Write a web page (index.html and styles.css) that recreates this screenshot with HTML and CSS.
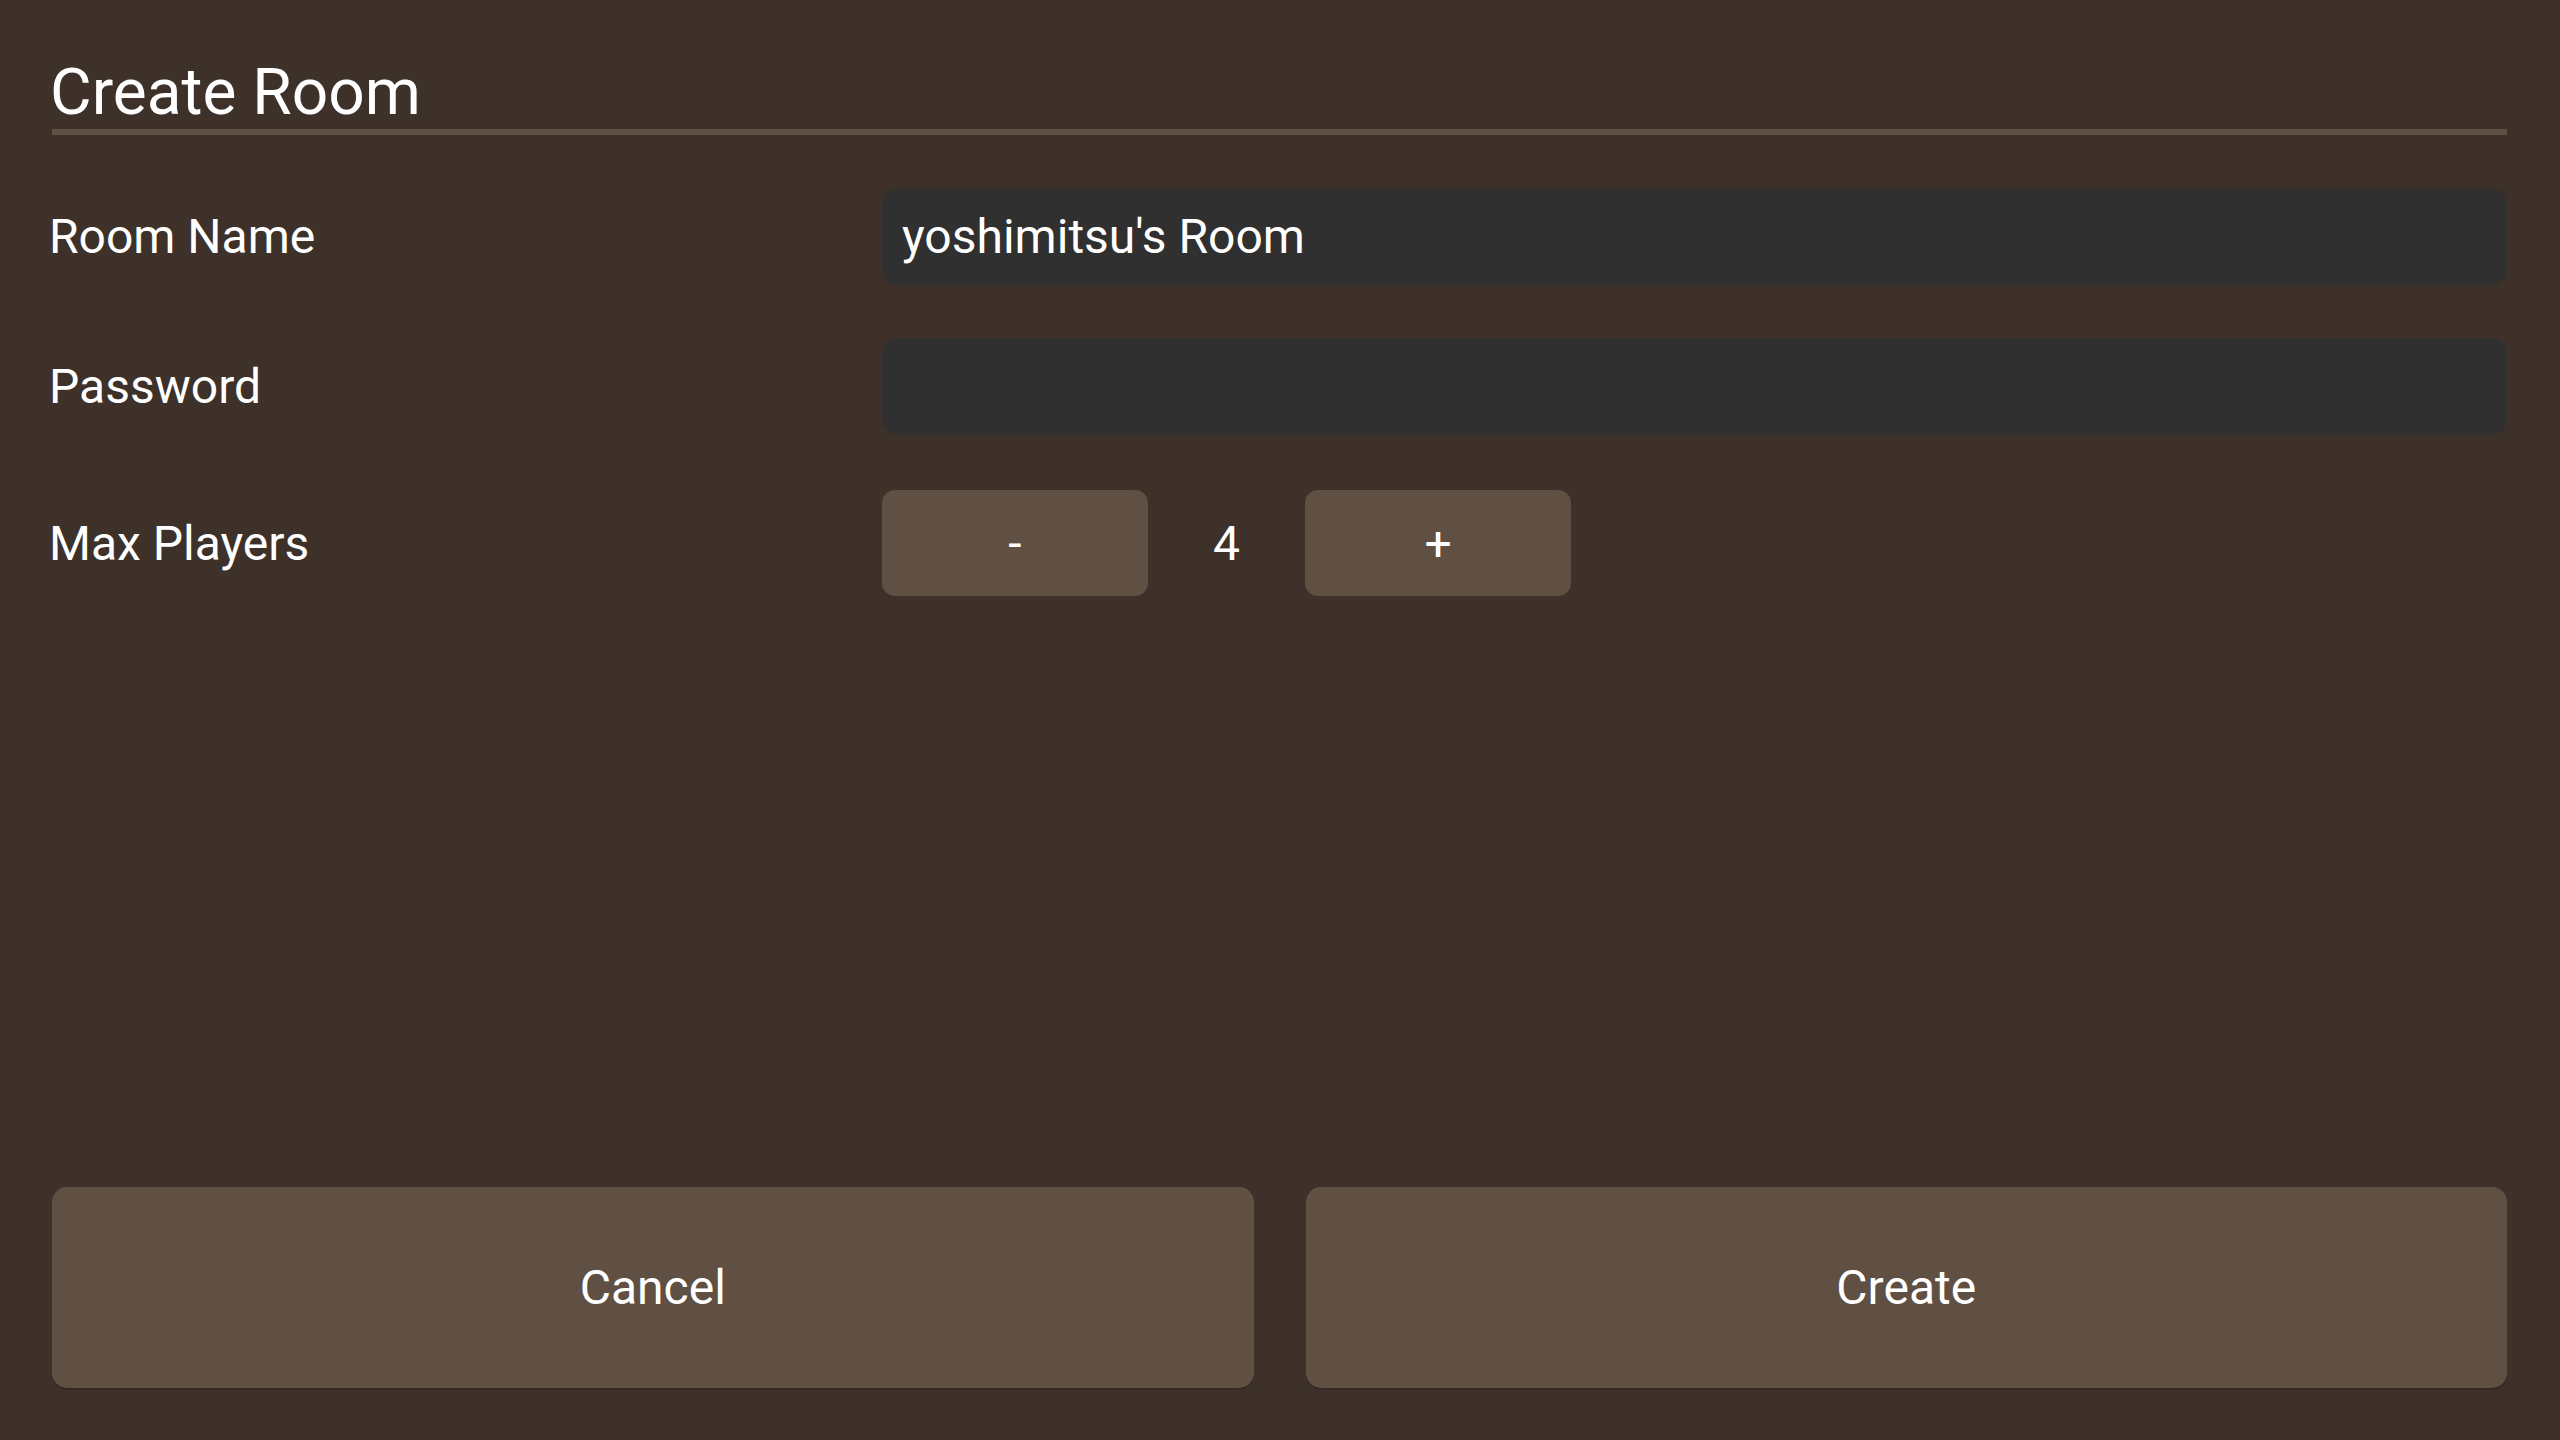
FILE: index.html
```html
<!DOCTYPE html>
<html lang="en">
<head>
  <meta charset="UTF-8" />
  <meta name="viewport" content="width=device-width, initial-scale=1.0"/>
  <title>Create Room</title>
  <link rel="stylesheet" href="styles.css">
</head>
<body>

  <div class="screen">
    <h1 class="titulo">Create Room</h1>

    <div class="linha">
      <label for="nome">Room Name</label>
      <input type="text" id="nome" class="campo" value="yoshimitsu's Room">
    </div>

    <div class="linha">
      <label for="senha">Password</label>
      <input type="password" id="senha" class="campo">
    </div>

    <div class="linha linha-jogadores">
      <label>Max Players</label>
      <div class="contador">
        <button class="passo" onclick="mudar(-1)">-</button>
        <span class="valor" id="valor">4</span>
        <button class="passo" onclick="mudar(1)">+</button>
      </div>
    </div>

    <div class="acoes">
      <button class="acao">Cancel</button>
      <button class="acao">Create</button>
    </div>
  </div>

  <script>
    let jogadores = 4;

    function mudar(delta) {
      jogadores = Math.min(8, Math.max(2, jogadores + delta));
      document.getElementById("valor").innerText = jogadores;
    }
  </script>
</body>
</html>
```

FILE: styles.css
```css
html, body {
  margin: 0;
  height: 100%;
}
body {
  font-family: Roboto, "Noto Sans", Arial, sans-serif;
  background-color: #3d3129;
  color: #fff;
}
.screen {
  box-sizing: border-box;
  height: 100vh;
  padding: 0 53px 52px 52px;
  display: flex;
  flex-direction: column;
}
.titulo {
  margin: 62px 0 0;
  font-size: 64px;
  font-weight: 400;
  line-height: 62px;
  padding-bottom: 5px;
  border-bottom: 6px solid #5f5043;
  text-indent: -2px;
}
.linha {
  display: flex;
  align-items: center;
  margin-top: 53px;
}
.linha label {
  width: 830px;
  flex-shrink: 0;
  font-size: 48px;
  margin-left: -3px;
  padding-right: 3px;
}
.campo {
  flex: 1;
  height: 97px;
  box-sizing: border-box;
  border: none;
  border-radius: 16px;
  background: #303030;
  color: #fff;
  font-family: inherit;
  font-size: 48px;
  padding: 0 20px;
  outline: none;
}
.linha-jogadores {
  margin-top: 55px;
}
.contador {
  display: flex;
  align-items: center;
}
.passo {
  width: 266px;
  height: 106px;
  border: none;
  border-radius: 13px;
  background: #5f5043;
  color: #fff;
  font-family: inherit;
  font-size: 48px;
  cursor: pointer;
}
.valor {
  width: 157px;
  text-align: center;
  font-size: 48px;
}
.acoes {
  margin-top: auto;
  display: flex;
  gap: 52px;
}
.acao {
  flex: 1;
  height: 201px;
  border: none;
  border-radius: 15px;
  background: #5f5043;
  color: #fff;
  font-family: inherit;
  font-size: 48px;
  box-shadow: 0 2px 0 rgba(0, 0, 0, 0.15);
  cursor: pointer;
}
```
